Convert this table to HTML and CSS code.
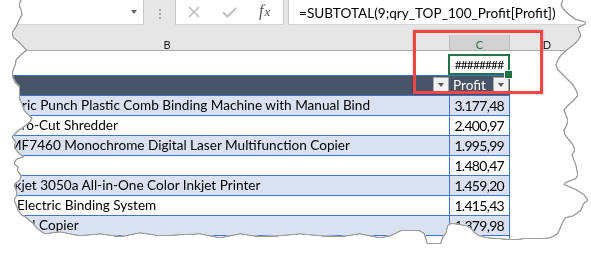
FILE: index.html
```html
<!DOCTYPE html>
<html lang="en">
<head>
<meta charset="utf-8">
<title>SUBTOTAL Profit</title>
<link rel="stylesheet" href="styles.css">
</head>
<body>
<div class="paper">
  <div class="sheet">
    <div class="fbar">
      <div class="namebox"><span class="nb-arrow"></span></div>
      <div class="grip"><i></i><i></i><i></i></div>
      <div class="fxbox">
        <svg class="ic-x" width="12" height="12" viewBox="0 0 12 12"><path d="M1 1L11 11M11 1L1 11" stroke="#b9b9b9" stroke-width="1.4" fill="none"/></svg>
        <svg class="ic-ok" width="15" height="11" viewBox="0 0 15 11"><path d="M1 5.5L5.5 9.5L14 1" stroke="#c2c2c2" stroke-width="2.2" fill="none"/></svg>
        <span class="fx"><i>f</i><i class="fx-x">x</i></span>
      </div>
      <div class="formula">=SUBTOTAL(9;qry_TOP_100_Profit[Profit])</div>
    </div>

    <div class="grid">
      <div class="ch">B</div>
      <div class="ch sel">C</div>
      <div class="ch d">D</div>

      <div class="blank"></div>
      <div class="c1">########</div>
      <div class="blank"></div>

      <div class="th"><span>Product Name</span><span class="fb"><b></b></span></div>
      <div class="th c"><span>Profit</span><span class="fb"><b></b></span></div>
      <div class="blank"></div>

      <div class="td alt r1">Fellowes PB500 Electric Punch Plastic Comb Binding Machine with Manual Bind</div>
      <div class="td num alt">3.177,48</div>
      <div class="blank"></div>

      <div class="td">Ativa V4110MDD Micro-Cut Shredder</div>
      <div class="td num">2.400,97</div>
      <div class="blank"></div>

      <div class="td alt">Canon imageCLASS MF7460 Monochrome Digital Laser Multifunction Copier</div>
      <div class="td num alt">1.995,99</div>
      <div class="blank"></div>

      <div class="td"></div>
      <div class="td num">1.480,47</div>
      <div class="blank"></div>

      <div class="td alt">Hewlett-Packard Deskjet 3050a All-in-One Color Inkjet Printer</div>
      <div class="td num alt">1.459,20</div>
      <div class="blank"></div>

      <div class="td">GBC DocuBind P400 Electric Binding System</div>
      <div class="td num">1.415,43</div>
      <div class="blank"></div>

      <div class="td alt">Sharp AL-1530CS Digital Copier</div>
      <div class="td num alt">1.379,98</div>
      <div class="blank"></div>

      <div class="td"></div>
      <div class="td num"></div>
      <div class="blank"></div>
    </div>

    <div class="callout"></div>
  </div>
</div>
</body>
</html>
```

FILE: styles.css
```css
* { box-sizing: border-box; }

html, body {
  margin: 0;
  background: #ffffff;
}

body {
  width: 591px;
  height: 253px;
  overflow: hidden;
  font-family: Lato, "Open Sans", sans-serif;
  color: #000;
}

.paper {
  width: 591px;
  height: 253px;
  filter: drop-shadow(1px 0 0 #9e9e9e) drop-shadow(-1px 0 0 #9e9e9e) drop-shadow(0 1px 0 #9e9e9e) drop-shadow(0 -1px 0 #9e9e9e);
}

.sheet {
  position: relative;
  width: 591px;
  height: 253px;
  overflow: hidden;
  background: #fff;
  clip-path: polygon(22px 0, 562px 0, 560px 5px, 563px 10px, 568px 15px, 575px 20px, 585px 23px, 577px 27px, 578px 31px, 580px 35px, 577px 40px, 572px 45px, 565px 50px, 560px 55px, 557px 60px, 555px 65px, 557px 70px, 562px 75px, 567px 80px, 572px 85px, 575px 90px, 577px 95px, 573px 100px, 567px 105px, 563px 110px, 565px 115px, 567px 120px, 566px 125px, 563px 130px, 564px 135px, 568px 140px, 572px 145px, 574px 150px, 571px 155px, 573px 160px, 575px 165px, 576px 170px, 577px 175px, 575px 178px, 565px 182px, 563px 185px, 575px 190px, 583px 195px, 587px 200px, 583px 203px, 580px 210px, 573px 215px, 565px 217px, 563px 220px, 557px 233px, 550px 237px, 540px 238px, 523px 238px, 515px 239px, 500px 238px, 487px 237px, 480px 235px, 475px 232px, 472px 228px, 467px 225px, 455px 223px, 450px 223px, 447px 225px, 445px 233px, 442px 237px, 440px 243px, 428px 243px, 425px 233px, 420px 230px, 400px 230px, 390px 235px, 380px 237px, 360px 233px, 340px 236px, 320px 235px, 300px 233px, 280px 235px, 260px 236px, 240px 233px, 220px 237px, 200px 233px, 180px 234px, 160px 235px, 140px 232px, 120px 236px, 100px 233px, 80px 235px, 60px 231px, 45px 233px, 38px 228px, 33px 222px, 27px 217px, 22px 214px, 19px 210px, 17px 205px, 15px 200px, 18px 195px, 17px 190px, 15px 185px, 21px 180px, 22px 175px, 18px 170px, 19px 167px, 15px 163px, 17px 160px, 25px 157px, 19px 152px, 15px 147px, 17px 142px, 13px 137px, 18px 132px, 25px 127px, 31px 122px, 33px 118px, 30px 115px, 25px 110px, 23px 104px, 20px 98px, 20px 92px, 20px 86px, 16px 82px, 14px 78px, 13px 75px, 14px 70px, 16px 65px, 17px 60px, 22px 55px, 28px 50px, 23px 45px, 18px 40px, 14px 37px, 13px 33px, 15px 30px, 18px 25px, 20px 20px, 23px 15px, 22px 10px, 20px 5px);
}

/* ---------- formula bar ---------- */
.fbar {
  display: flex;
  align-items: flex-start;
  height: 35px;
  background: #e6e6e6;
}

.namebox {
  width: 144px;
  height: 25px;
  background: #fff;
  border-right: 1px solid #c6c6c6;
  border-bottom: 1px solid #d6d6d6;
  display: flex;
  align-items: center;
  justify-content: flex-end;
  padding-right: 6px;
}

.nb-arrow {
  width: 0;
  height: 0;
  border-left: 3.5px solid transparent;
  border-right: 3.5px solid transparent;
  border-top: 4px solid #666;
}

.grip {
  width: 31px;
  display: flex;
  flex-direction: column;
  align-items: center;
  gap: 2px;
  padding-top: 9px;
}

.grip i {
  width: 2px;
  height: 2px;
  background: #a8a8a8;
}

.fxbox {
  width: 109px;
  height: 25px;
  background: #fff;
  border-left: 1px solid #c6c6c6;
  border-right: 1px solid #c6c6c6;
  border-bottom: 1px solid #d6d6d6;
  display: flex;
  align-items: center;
}

.ic-x { margin-left: 12px; }
.ic-ok { margin-left: 22px; }

.fx {
  margin-left: 22px;
  font-family: "Liberation Serif", serif;
  font-size: 16px;
  color: #555;
  line-height: 1;
  padding-bottom: 2px;
}

.fx-x {
  font-size: 13px;
  margin-left: 1px;
}

.formula {
  flex: 1;
  margin-left: 4px;
  height: 25px;
  background: #fff;
  border-left: 1px solid #c6c6c6;
  border-bottom: 1px solid #d6d6d6;
  padding: 1px 0 0 10px;
  font-size: 13.6px;
  line-height: 25px;
  white-space: nowrap;
}

/* ---------- grid ---------- */
.grid {
  display: grid;
  width: 706px;
  margin-left: -115px;
  grid-template-columns: 564px 61px 1fr;
  grid-template-rows: 16px 24px repeat(9, 20px);
  font-size: 13.6px;
}

.ch {
  background: #e6e6e6;
  border-bottom: 1px solid #ababab;
  text-align: center;
  font-size: 11px;
  line-height: 20px;
  color: #222;
}

.ch.sel {
  background: #d2d2d2;
  color: #217346;
  border-left: 1px solid #bcbcbc;
  border-right: 1px solid #bcbcbc;
}

.ch.d {
  padding-right: 7px;
}

.blank { background: #fff; }

.c1 {
  position: relative;
  margin: 3px 0 0 -1px;
  border: 2px solid #217346;
  text-align: center;
  font-size: 12px;
  letter-spacing: -0.9px;
  line-height: 17px;
}

.c1::after {
  content: "";
  position: absolute;
  right: -5px;
  bottom: -6px;
  width: 7px;
  height: 7px;
  background: #217346;
  border: 1px solid #fff;
}

.th {
  background: #485468;
  border-top: 1px solid #4472c4;
  color: #fff;
  display: flex;
  justify-content: space-between;
  align-items: flex-start;
  padding-left: 3px;
  line-height: 19px;
  white-space: nowrap;
  overflow: hidden;
}

.th.c {
  padding-left: 4px;
}

.th.c .fb { margin-right: 1px; }

.fb {
  flex: none;
  width: 16px;
  height: 15px;
  margin-top: 1px;
  background: #f2f2f2;
  border: 1px solid #a9a9a9;
  display: flex;
  align-items: center;
  justify-content: center;
}

.fb b {
  width: 0;
  height: 0;
  border-left: 3.5px solid transparent;
  border-right: 3.5px solid transparent;
  border-top: 4px solid #595959;
}

.td {
  border-top: 1px solid #4472c4;
  padding-left: 3px;
  line-height: 19px;
  white-space: nowrap;
  overflow: hidden;
  background: #fff;
}

.td.r1 { padding-left: 8px; }

.td.alt { background: #dae1f2; }

.td.num {
  border-left: 1px solid #4472c4;
  border-right: 1px solid #4472c4;
  text-align: right;
  padding-right: 5px;
  font-size: 14px;
  letter-spacing: -0.7px;
}

/* annotation */
.callout {
  position: absolute;
  left: 413px;
  top: 30px;
  width: 130px;
  height: 64px;
  border: 3px solid #f04646;
  box-shadow: 0 0 2px rgba(0, 0, 0, 0.3);
}
```
